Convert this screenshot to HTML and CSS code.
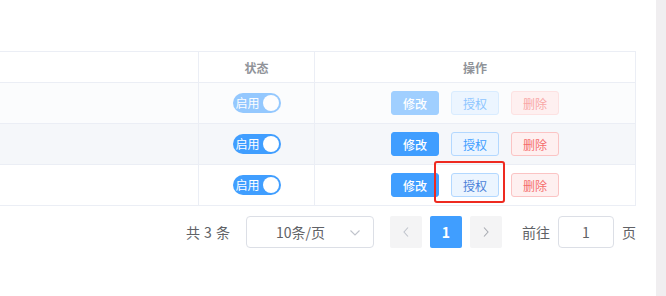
FILE: index.html
```html
<!DOCTYPE html>
<html lang="zh">
<head>
<meta charset="utf-8">
<link rel="stylesheet" href="styles.css">
</head>
<body>
<div class="page">
  <div class="main">
    <div class="table">
      <div class="row head">
        <div class="cell c1"></div>
        <div class="cell c2">状态</div>
        <div class="cell c3">操作</div>
      </div>
      <div class="row r1">
        <div class="cell c1"></div>
        <div class="cell c2"><span class="switch dim"><span class="sw-text">启用</span><span class="knob"></span></span></div>
        <div class="cell c3">
          <span class="btn primary disabled">修改</span>
          <span class="btn plain-blue disabled">授权</span>
          <span class="btn plain-red disabled">删除</span>
        </div>
      </div>
      <div class="row r2">
        <div class="cell c1"></div>
        <div class="cell c2"><span class="switch"><span class="sw-text">启用</span><span class="knob"></span></span></div>
        <div class="cell c3">
          <span class="btn primary">修改</span>
          <span class="btn plain-blue">授权</span>
          <span class="btn plain-red">删除</span>
        </div>
      </div>
      <div class="row r3">
        <div class="cell c1"></div>
        <div class="cell c2"><span class="switch"><span class="sw-text">启用</span><span class="knob"></span></span></div>
        <div class="cell c3">
          <span class="btn primary">修改</span>
          <span class="mark-wrap"><span class="btn plain-blue focus">授权</span><span class="mark"></span></span>
          <span class="btn plain-red">删除</span>
        </div>
      </div>
    </div>
    <div class="pager">
      <span class="total">共 3 条</span>
      <span class="select"><span class="sel-text">10条/页</span>
        <svg class="chev" width="10" height="6" viewBox="0 0 10 6"><path d="M0.5 0.5 L5 5 L9.5 0.5" fill="none" stroke="#c0c4cc" stroke-width="1.1"/></svg>
      </span>
      <span class="pbtn"><svg width="6" height="10" viewBox="0 0 6 10"><path d="M5 0.5 L1 5 L5 9.5" fill="none" stroke="#c0c4cc" stroke-width="1.1"/></svg></span>
      <span class="pnum">1</span>
      <span class="pbtn"><svg width="6" height="10" viewBox="0 0 6 10"><path d="M1 0.5 L5 5 L1 9.5" fill="none" stroke="#a8abb2" stroke-width="1.1"/></svg></span>
      <span class="jump">前往</span>
      <span class="jinput">1</span>
      <span class="jump">页</span>
    </div>
  </div>
  <div class="scrollbar"></div>
</div>
</body>
</html>
```
FILE: styles.css
```css
* { box-sizing: border-box; }
html, body { margin: 0; padding: 0; background: #fff; }
body {
  font-family: "Noto Sans CJK SC", "Noto Sans", "Liberation Sans", sans-serif;
  color: #606266;
  width: 666px;
  height: 296px;
  overflow: hidden;
}
.page { display: flex; height: 296px; }
.main { width: 656px; padding-top: 51px; }
.scrollbar { width: 10px; height: 296px; background: #f0eef0; }

.table { width: 636px; border-top: 1px solid #ebeef5; }
.row { display: flex; height: 41px; border-bottom: 1px solid #ebeef5; }
.row.head { height: 31px; }
.r1 { background: #fbfcfd; }
.r2 { background: #f5f7fa; }
.cell {
  display: flex; align-items: center; justify-content: center;
  border-right: 1px solid #ebeef5;
  font-size: 12px;
}
.c1 { width: 199px; }
.c2 { width: 116px; }
.c3 { width: 321px; gap: 12px; }
.head .cell { color: #909399; font-weight: bold; font-size: 12px; }

.switch {
  position: relative;
  display: inline-flex; align-items: center;
  width: 48px; height: 20px; border-radius: 10px;
  background: #409eff;
  padding-left: 3px;
}
.switch.dim { opacity: 0.55; }
.sw-text { color: #fff; font-size: 12px; line-height: 20px; }
.knob {
  position: absolute; right: 2px; top: 2px;
  width: 16px; height: 16px; border-radius: 50%; background: #fff;
}

.btn {
  display: inline-flex; align-items: center; justify-content: center;
  width: 48px; height: 24px; border-radius: 3px;
  font-size: 12px; border: 1px solid transparent;
}
.primary { background: #409eff; border-color: #409eff; color: #fff; font-weight: 500; }
.primary.disabled { background: #a0cfff; border-color: #a0cfff; }
.plain-blue { background: #ecf5ff; border-color: #b3d8ff; color: #409eff; }
.plain-blue.disabled { color: #8cc5ff; border-color: #d9ecff; }
.plain-blue.focus { color: #4a7fd8; }
.plain-red { background: #fef0f0; border-color: #fbc4c4; color: #f56c6c; }
.plain-red.disabled { color: #f9a7a7; border-color: #fde2e2; }

.mark-wrap { position: relative; display: inline-flex; }
.mark {
  position: absolute; left: -17px; top: -12px;
  width: 71px; height: 42px;
  border: 2px solid #ee2a20; border-radius: 3px;
}

.pager {
  display: flex; align-items: center; justify-content: flex-end;
  width: 636px; margin-top: 10px; height: 32px;
  font-size: 14px; color: #606266;
}
.total { margin-right: 16px; word-spacing: 1px; }
.select {
  position: relative;
  display: flex; align-items: center;
  width: 128px; height: 32px;
  border: 1px solid #dcdfe6; border-radius: 4px;
  padding-left: 29px;
  margin-right: 16px;
}
.chev { position: absolute; right: 13px; top: 13px; }
.pbtn, .pnum {
  display: flex; align-items: center; justify-content: center;
  width: 32px; height: 32px; border-radius: 2px;
  background: #f4f4f5;
}
.pnum { background: #409eff; color: #fff; font-weight: bold; font-size: 14px; margin: 0 8px; }
.jump { margin-left: 20px; }
.jinput {
  display: flex; align-items: center; justify-content: center;
  width: 56px; height: 32px; margin: 0 8px;
  border: 1px solid #dcdfe6; border-radius: 4px;
}
.jinput + .jump { margin-left: 0; }
```
